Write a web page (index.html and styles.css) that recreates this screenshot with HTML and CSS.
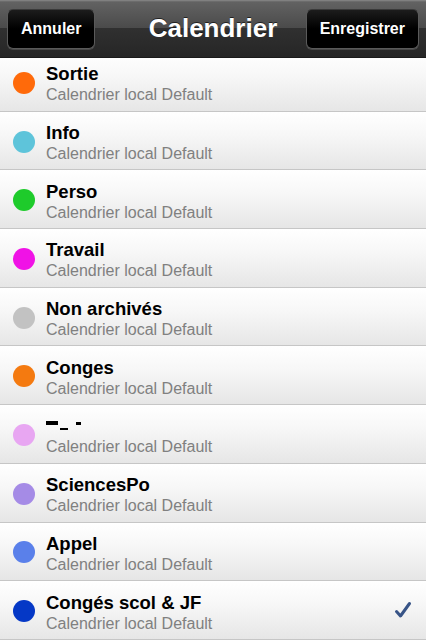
FILE: index.html
```html
<!DOCTYPE html>
<html lang="fr">
<head>
    <meta charset="UTF-8">
    <meta name="viewport" content="width=device-width, initial-scale=1.0">
    <title>Calendrier</title>
    <link rel="stylesheet" href="styles.css">
</head>
<body>
    <div class="navbar">
        <button class="nav-button nav-left">Annuler</button>
        <h1 class="nav-title">Calendrier</h1>
        <button class="nav-button nav-right">Enregistrer</button>
    </div>

    <div class="scroll">
        <ul class="list">
            <li class="row">
                <span class="dot dot-sortie"></span>
                <div class="row-text">
                    <div class="row-title">Sortie</div>
                    <div class="row-sub">Calendrier local Default</div>
                </div>
            </li>
            <li class="row">
                <span class="dot dot-info"></span>
                <div class="row-text">
                    <div class="row-title">Info</div>
                    <div class="row-sub">Calendrier local Default</div>
                </div>
            </li>
            <li class="row">
                <span class="dot dot-perso"></span>
                <div class="row-text">
                    <div class="row-title">Perso</div>
                    <div class="row-sub">Calendrier local Default</div>
                </div>
            </li>
            <li class="row">
                <span class="dot dot-travail"></span>
                <div class="row-text">
                    <div class="row-title">Travail</div>
                    <div class="row-sub">Calendrier local Default</div>
                </div>
            </li>
            <li class="row">
                <span class="dot dot-archive"></span>
                <div class="row-text">
                    <div class="row-title">Non archivés</div>
                    <div class="row-sub">Calendrier local Default</div>
                </div>
            </li>
            <li class="row">
                <span class="dot dot-conges"></span>
                <div class="row-text">
                    <div class="row-title">Conges</div>
                    <div class="row-sub">Calendrier local Default</div>
                </div>
            </li>
            <li class="row">
                <span class="dot dot-hidden"></span>
                <div class="row-text">
                    <div class="row-title redacted">
                        <span class="blot blot-a"></span>
                        <span class="blot blot-b"></span>
                        <span class="blot blot-c"></span>
                    </div>
                    <div class="row-sub">Calendrier local Default</div>
                </div>
            </li>
            <li class="row">
                <span class="dot dot-sciences"></span>
                <div class="row-text">
                    <div class="row-title">SciencesPo</div>
                    <div class="row-sub">Calendrier local Default</div>
                </div>
            </li>
            <li class="row">
                <span class="dot dot-appel"></span>
                <div class="row-text">
                    <div class="row-title">Appel</div>
                    <div class="row-sub">Calendrier local Default</div>
                </div>
            </li>
            <li class="row">
                <span class="dot dot-scol"></span>
                <div class="row-text">
                    <div class="row-title">Congés scol &amp; JF</div>
                    <div class="row-sub">Calendrier local Default</div>
                </div>
                <svg class="check" width="18" height="18" viewBox="0 0 18 18">
                    <path d="M2.5 10.5 L6.5 15 L15.5 2.5" fill="none" stroke="#385487" stroke-width="3" stroke-linecap="round" stroke-linejoin="round"/>
                </svg>
            </li>
        </ul>
    </div>
</body>
</html>
```

FILE: styles.css
```css
body {
    font-family: 'Liberation Sans', Arial, sans-serif;
    margin: 0;
    padding: 0;
    width: 426px;
    height: 640px;
    overflow: hidden;
    background-color: #ffffff;
    display: flex;
    flex-direction: column;
}

.navbar {
    height: 58px;
    flex-shrink: 0;
    display: grid;
    grid-template-columns: 1fr auto 1fr;
    align-items: center;
    padding: 0 7px;
    background: linear-gradient(#8a8a8a 0, #626262 2px, #4a4a4a 50%, #303030 50%, #262626 100%);
    border-bottom: 1px solid #1a1a1a;
    box-sizing: border-box;
}

.nav-left {
    justify-self: start;
}

.nav-right {
    justify-self: end;
}

.nav-title {
    margin: 0;
    color: #ffffff;
    font-size: 26px;
    font-weight: bold;
    text-shadow: 0 -1px 0 rgba(0,0,0,0.6);
}

.nav-button {
    height: 40px;
    padding: 0 13px;
    background: linear-gradient(#1c1c1c, #000000 50%, #000000);
    color: #ffffff;
    border: 1px solid #5a5a5a;
    border-top-color: #3a3a3a;
    border-radius: 6px;
    font-family: inherit;
    font-size: 16px;
    font-weight: bold;
    box-shadow: 0 1px 0 rgba(255,255,255,0.15);
}

.scroll {
    flex: 1;
    overflow: hidden;
}

.list {
    list-style: none;
    margin: -5px 0 0 0;
    padding: 0;
}

.row {
    height: 58.7px;
    box-sizing: border-box;
    display: flex;
    align-items: center;
    background: linear-gradient(#ffffff, #f7f7f7 40%, #e6e6e6);
    border-bottom: 1px solid #c6c6c6;
    padding: 0 14px 0 13px;
}

.dot {
    width: 22px;
    height: 22px;
    border-radius: 50%;
    flex-shrink: 0;
    margin-right: 11px;
    margin-top: 2px;
}

.dot-sortie { background-color: #ff6a0a; }
.dot-info { background-color: #5ec4da; }
.dot-perso { background-color: #1ecb2b; }
.dot-travail { background-color: #f012e6; }
.dot-archive { background-color: #c2c2c2; }
.dot-conges { background-color: #f47a10; }
.dot-hidden { background-color: #e8a6f2; }
.dot-sciences { background-color: #a58be6; }
.dot-appel { background-color: #5a80ea; }
.dot-scol { background-color: #0538c6; }

.row-text {
    flex: 1;
    display: flex;
    flex-direction: column;
    margin-top: 5px;
}

.row-title {
    font-size: 18.5px;
    font-weight: bold;
    color: #000000;
    line-height: 21px;
}

.row-sub {
    font-size: 16px;
    color: #808080;
    line-height: 21px;
}

.redacted {
    position: relative;
    height: 21px;
}

.blot {
    position: absolute;
    background-color: #000000;
}

.blot-a { left: 0; top: 6px; width: 12px; height: 4px; }
.blot-b { left: 14px; top: 13px; width: 8px; height: 2px; }
.blot-c { left: 30px; top: 7px; width: 5px; height: 3px; }

.check {
    flex-shrink: 0;
}
```
